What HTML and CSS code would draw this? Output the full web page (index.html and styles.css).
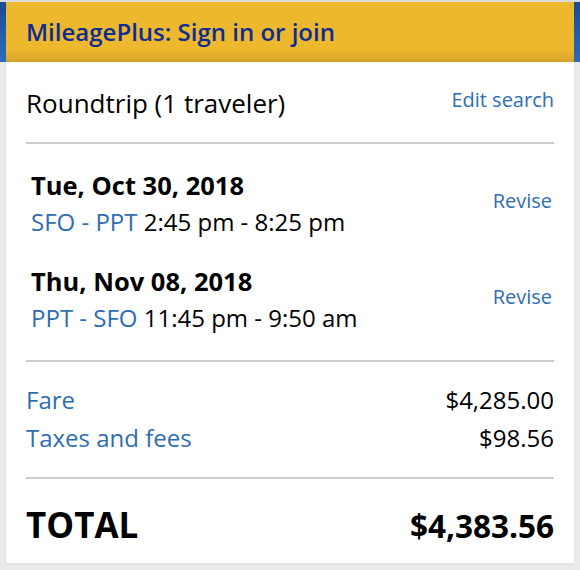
FILE: index.html
```html
<!DOCTYPE html>
<html>
<head>
<meta charset="utf-8">
<link rel="stylesheet" href="styles.css">
</head>
<body>
<div class="topline"></div>
<div class="band">
  <div class="mp">MileagePlus: Sign in or join</div>
</div>
<div class="card">
  <div class="row trip">
    <div class="big">Roundtrip (1 traveler)</div>
    <a class="link edit">Edit search</a>
  </div>
  <div class="rule"></div>
  <div class="flights">
    <div class="row flight">
      <div>
        <div class="date">Tue, Oct 30, 2018</div>
        <div class="route"><span class="blue">SFO - PPT</span> 2:45 pm - 8:25 pm</div>
      </div>
      <a class="link revise">Revise</a>
    </div>
    <div class="row flight">
      <div>
        <div class="date">Thu, Nov 08, 2018</div>
        <div class="route"><span class="blue">PPT - SFO</span> 11:45 pm - 9:50 am</div>
      </div>
      <a class="link revise">Revise</a>
    </div>
  </div>
  <div class="rule"></div>
  <div class="prices">
    <div class="row price"><span class="blue">Fare</span><span>$4,285.00</span></div>
    <div class="row price"><span class="blue">Taxes and fees</span><span>$98.56</span></div>
  </div>
  <div class="rule"></div>
  <div class="row total"><span class="total-label">TOTAL</span><span class="total-amount">$4,383.56</span></div>
</div>
</body>
</html>
```
FILE: styles.css
```css
html, body {
  margin: 0;
  padding: 0;
}
body {
  background: #ebebeb;
  font-family: "Open Sans", "DejaVu Sans", sans-serif;
  color: #000;
  width: 580px;
  height: 570px;
  overflow: hidden;
}
.topline {
  height: 2px;
  background: #dcdcdc;
}
.band {
  background: linear-gradient(to bottom, #1b4b93, #2a6cbd);
  padding: 0 6px;
}
.mp {
  height: 60px;
  box-sizing: border-box;
  background: linear-gradient(to bottom, #edb72e 0%, #edb72e 78%, #d7a428 100%);
  color: #0e2d90;
  font-weight: 600;
  font-size: 24px;
  line-height: 60px;
  padding-left: 20px;
}
.card {
  margin: 0 6px;
  background: #fff;
  padding: 0 20px;
  height: 501px;
  box-sizing: border-box;
  box-shadow: 0 1px 4px rgba(0,0,0,0.08);
}
.row {
  display: flex;
  justify-content: space-between;
}
.trip {
  padding-top: 24px;
  height: 80px;
  box-sizing: border-box;
  align-items: flex-start;
}
.big {
  font-size: 26px;
  line-height: 34px;
}
.link {
  color: #2e6db4;
  font-size: 20px;
  line-height: 28px;
}
.rule {
  height: 2px;
  background: #cccccc;
}
.flights {
  padding: 24px 0 24px 5px;
  display: flex;
  flex-direction: column;
  gap: 24px;
}
.flight {
  align-items: flex-start;
}
.date {
  font-weight: 700;
  font-size: 25.5px;
  line-height: 35px;
}
.route {
  font-size: 24px;
  line-height: 37px;
}
.blue {
  color: #2e6db4;
}
.revise {
  margin-top: 19px;
  margin-right: 2px;
}
.prices {
  padding: 19px 0 20px 0;
}
.price {
  font-size: 24px;
  line-height: 38px;
}
.total {
  font-weight: 700;
  line-height: 44px;
  padding-top: 24px;
  align-items: baseline;
}
.total-label {
  font-size: 35px;
}
.total-amount {
  font-size: 31.5px;
}
```
